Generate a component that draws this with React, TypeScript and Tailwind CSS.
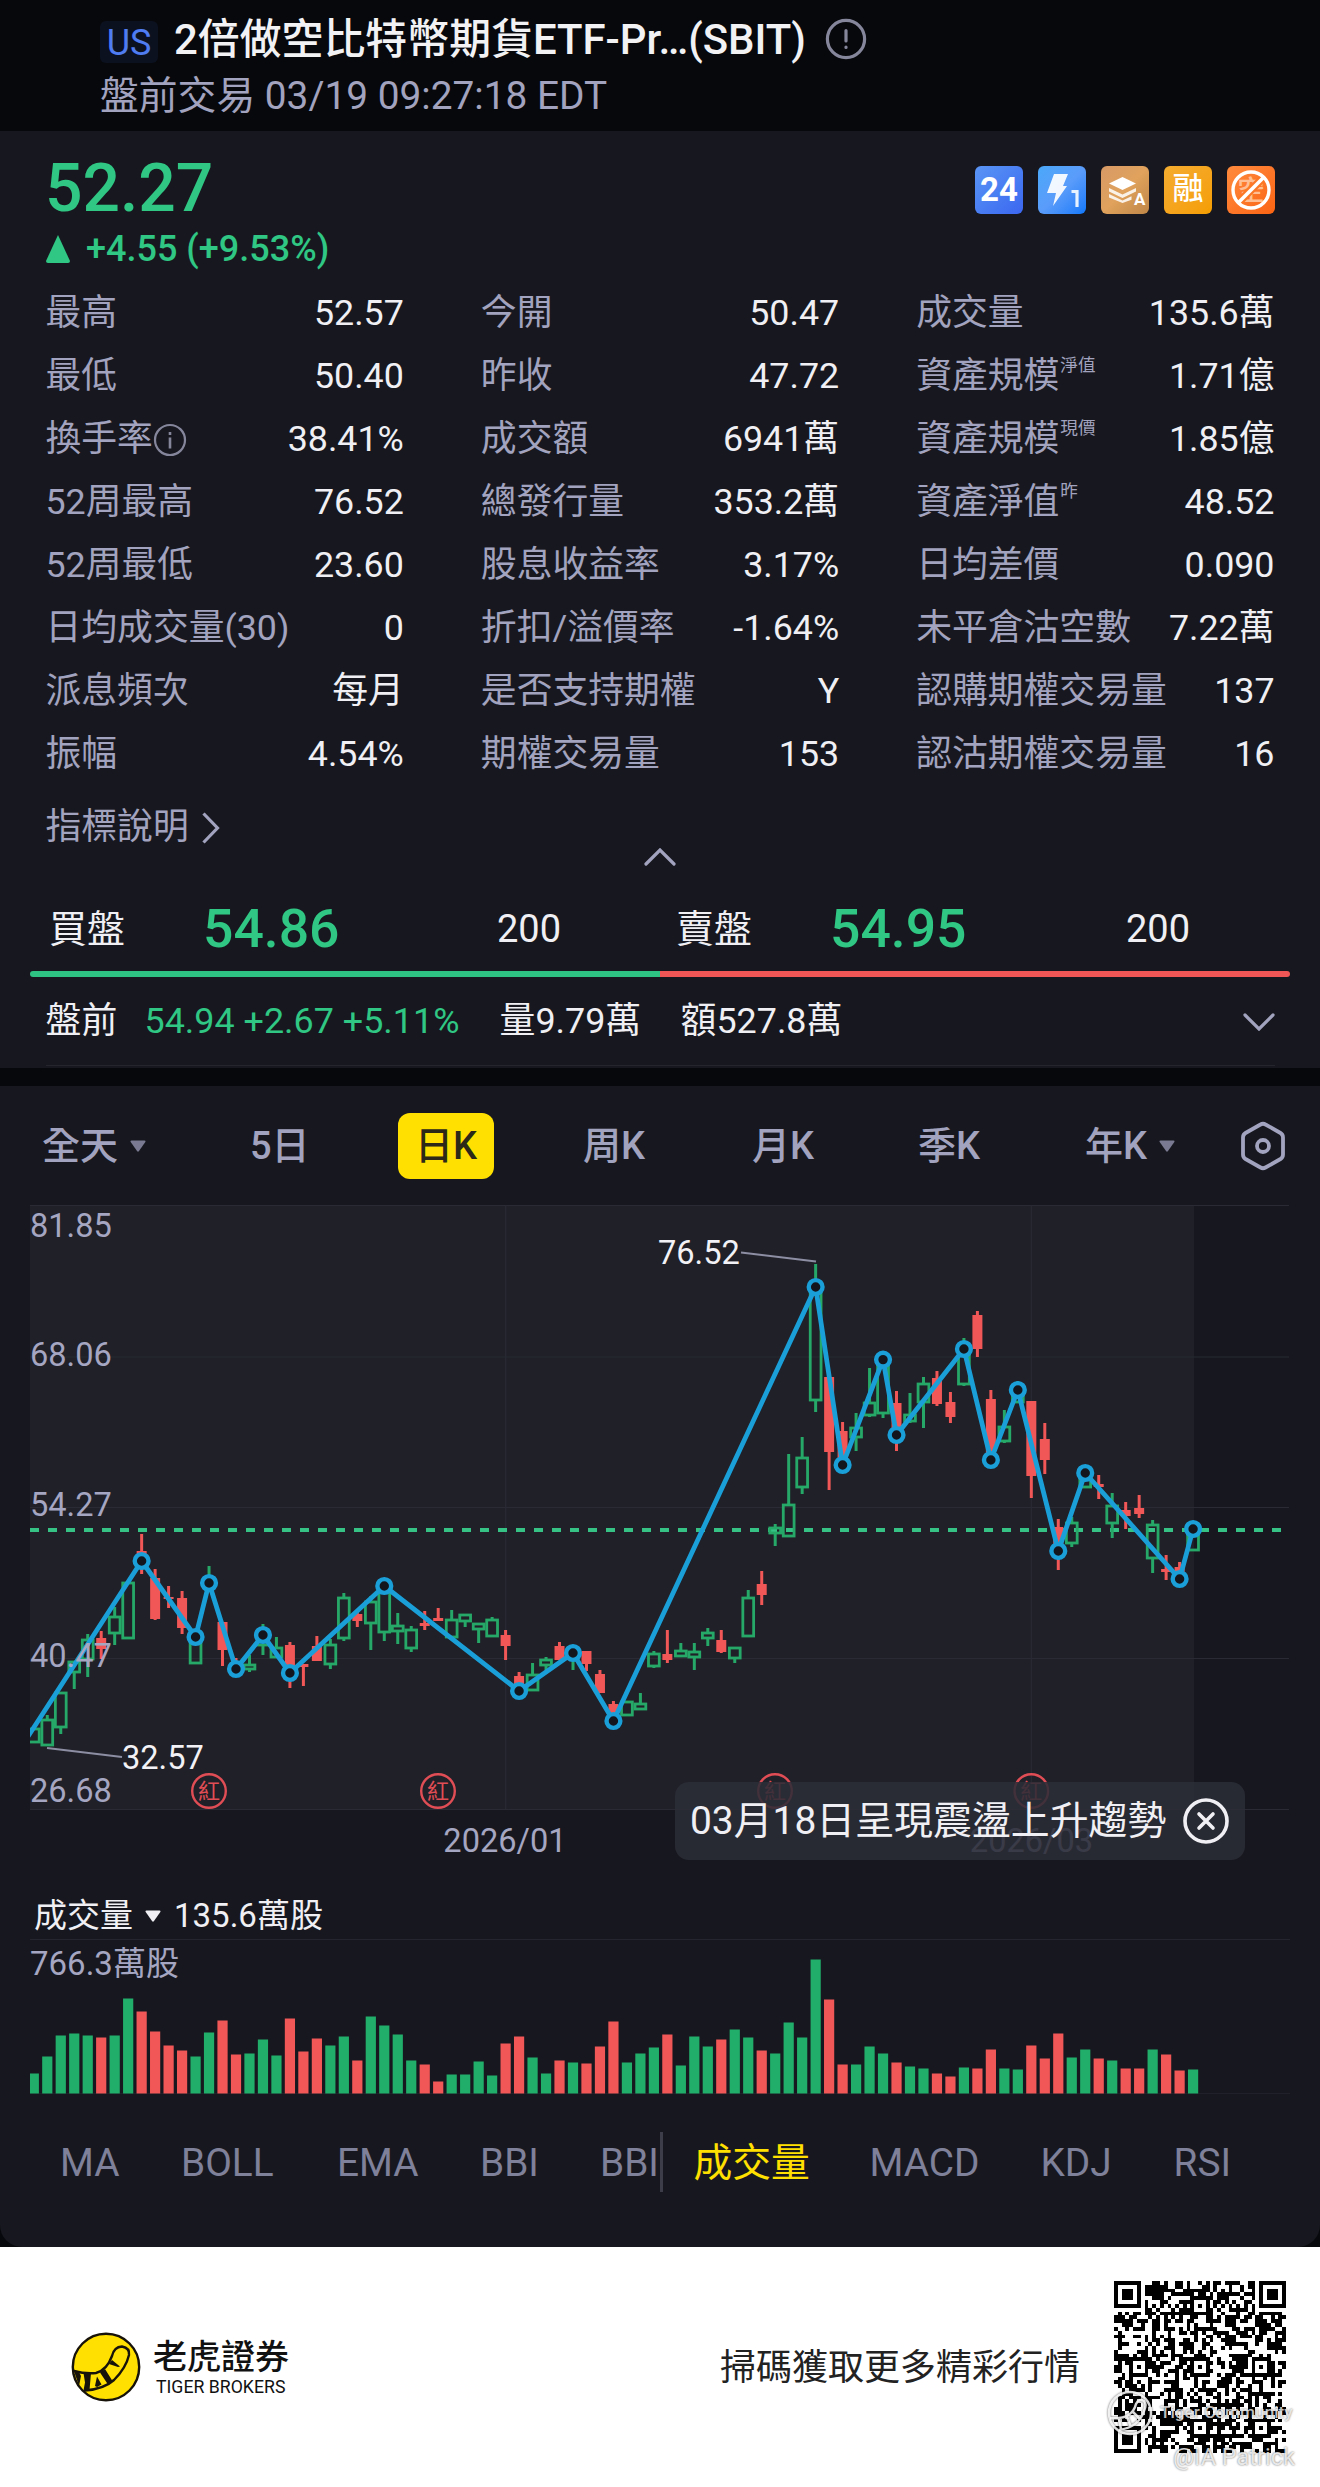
import React from "react";

const FONT = "font-['Roboto','Noto_Sans_CJK_TC',sans-serif]";

type Stat = { label: string; value: string; sup?: string; info?: boolean };

const STATS: Stat[] = [
  { label: "最高", value: "52.57" },
  { label: "今開", value: "50.47" },
  { label: "成交量", value: "135.6萬" },
  { label: "最低", value: "50.40" },
  { label: "昨收", value: "47.72" },
  { label: "資產規模", sup: "淨值", value: "1.71億" },
  { label: "換手率", info: true, value: "38.41%" },
  { label: "成交額", value: "6941萬" },
  { label: "資產規模", sup: "現價", value: "1.85億" },
  { label: "52周最高", value: "76.52" },
  { label: "總發行量", value: "353.2萬" },
  { label: "資產淨值", sup: "昨", value: "48.52" },
  { label: "52周最低", value: "23.60" },
  { label: "股息收益率", value: "3.17%" },
  { label: "日均差價", value: "0.090" },
  { label: "日均成交量(30)", value: "0" },
  { label: "折扣/溢價率", value: "-1.64%" },
  { label: "未平倉沽空數", value: "7.22萬" },
  { label: "派息頻次", value: "每月" },
  { label: "是否支持期權", value: "Y" },
  { label: "認購期權交易量", value: "137" },
  { label: "振幅", value: "4.54%" },
  { label: "期權交易量", value: "153" },
  { label: "認沽期權交易量", value: "16" },
];

// [up?, body top, body bottom, wick top, wick bottom, volume height]
const CANDLES: number[][] = [
  [1, 539, 552, 539, 552, 20], [1, 530, 555, 525, 555, 37], [1, 503, 537, 503, 544, 58], [1, 472, 482, 472, 499, 60],
  [1, 450, 469, 444, 487, 58], [0, 448, 459, 441, 469, 56], [1, 427, 443, 417, 455, 58], [1, 393, 448, 393, 448, 95],
  [0, 361, 375, 344, 384, 82], [0, 388, 429, 379, 430, 62], [0, 407, 409, 396, 418, 48], [0, 408, 438, 401, 444, 43],
  [1, 449, 473, 449, 473, 37], [1, 391, 395, 376, 400, 61], [0, 432, 460, 432, 476, 73], [0, 472, 479, 468, 479, 39],
  [1, 475, 479, 465, 482, 40], [1, 445, 455, 434, 465, 54], [1, 458, 467, 447, 467, 38], [0, 455, 482, 452, 498, 75],
  [0, 474, 477, 474, 496, 42], [0, 456, 471, 446, 471, 55], [1, 455, 474, 449, 479, 48], [1, 408, 448, 403, 451, 57],
  [0, 424, 431, 422, 437, 33], [1, 412, 433, 406, 460, 77], [1, 398, 442, 398, 451, 68], [1, 436, 441, 423, 454, 59],
  [1, 440, 458, 436, 462, 33], [0, 433, 436, 421, 440, 29], [0, 428, 431, 418, 431, 12], [1, 430, 447, 420, 448, 19],
  [1, 425, 431, 425, 437, 19], [1, 434, 439, 434, 453, 32], [1, 430, 446, 427, 446, 18], [0, 445, 456, 440, 470, 50],
  [0, 486, 500, 482, 501, 57], [1, 485, 500, 473, 501, 36], [1, 470, 475, 467, 480, 20], [0, 456, 470, 452, 470, 33],
  [1, 462, 466, 462, 480, 31], [0, 461, 474, 461, 481, 30], [0, 484, 503, 480, 503, 47], [0, 514, 531, 511, 531, 72],
  [1, 512, 525, 512, 525, 31], [1, 514, 519, 503, 519, 40], [1, 464, 476, 461, 478, 46], [0, 464, 470, 440, 473, 59],
  [1, 461, 466, 453, 467, 28], [1, 462, 467, 453, 480, 57], [1, 443, 448, 438, 456, 47], [0, 450, 462, 440, 463, 54],
  [1, 458, 468, 458, 473, 64], [1, 408, 446, 400, 446, 56], [0, 394, 405, 381, 415, 43], [1, 338, 343, 334, 356, 40],
  [1, 315, 346, 264, 346, 71], [1, 268, 297, 247, 304, 56], [1, 98, 210, 74, 222, 134], [0, 187, 262, 187, 300, 94],
  [0, 241, 273, 232, 275, 29], [1, 238, 247, 223, 261, 29], [1, 213, 225, 178, 227, 47], [1, 172, 223, 170, 228, 40],
  [0, 213, 246, 201, 261, 31], [1, 225, 231, 203, 233, 27], [1, 194, 212, 187, 238, 25], [0, 188, 214, 181, 216, 20],
  [0, 212, 227, 202, 233, 17], [1, 162, 194, 148, 196, 26], [0, 125, 159, 121, 167, 25], [0, 209, 269, 200, 269, 44],
  [1, 237, 251, 220, 253, 25], [1, 201, 212, 191, 213, 24], [0, 211, 286, 211, 308, 48], [0, 249, 270, 233, 284, 35],
  [0, 337, 361, 329, 380, 60], [1, 333, 353, 327, 357, 36], [1, 285, 297, 285, 298, 44], [0, 294, 297, 285, 309, 35],
  [1, 316, 333, 303, 348, 33], [0, 320, 326, 312, 339, 25], [0, 318, 324, 305, 328, 25], [1, 335, 368, 330, 383, 44],
  [0, 379, 382, 365, 390, 39], [0, 377, 389, 372, 389, 23], [1, 341, 360, 341, 360, 24],
];

const TREND: number[][] = [
  [8, 371], [12, 447], [13, 393], [15, 479], [17, 445], [19, 483], [26, 396], [36, 501], [40, 463], [43, 531], [58, 97],
  [60, 275], [63, 169.6], [64, 245], [69, 159], [71, 270], [73, 200], [76, 361], [78, 283], [85, 389], [86, 339],
];

const cx = (i: number) => 33.8 + i * 13.48;
const GREEN = "#26a968";
const RED = "#f25757";

const Y_LABELS: [string, number][] = [["81.85", 35], ["68.06", 163.5], ["54.27", 314], ["40.47", 464.5], ["26.68", 600]];

function Dividend({ x }: { x: number }) {
  return (
    <g>
      <circle cx={x} cy={601} r={16.8} fill="none" stroke="#e14d55" strokeWidth={2.4} />
      <text x={x} y={609} fontSize={22} fill="#e14d55" textAnchor="middle">紅</text>
    </g>
  );
}

function PriceChart() {
  return (
    <svg viewBox="0 0 1320 680" className="block h-[680px] w-full">
      <defs>
        <clipPath id="plot"><rect x={30} y={0} width={1290} height={680} /></clipPath>
      </defs>
      <rect x={30} y={15.5} width={1164} height={603.5} fill="#1f2028" />
      <g stroke="#292a33" strokeWidth={1.2}>
        {[15.5, 167, 317.5, 468.5, 619.5].map((y) => <line key={y} x1={30} x2={1289} y1={y} y2={y} />)}
        <line x1={505.7} x2={505.7} y1={15} y2={619} />
        <line x1={1031.3} x2={1031.3} y1={15} y2={619} />
      </g>
      <line x1={30} x2={1283} y1={340} y2={340} stroke="#36c285" strokeWidth={4} strokeDasharray="9 9" />
      <g clipPath="url(#plot)">
        {CANDLES.map(([up, t, b, wt, wb], i) => {
          const x = cx(i);
          const c = up ? GREEN : RED;
          return (
            <g key={i} stroke={c}>
              <line x1={x} x2={x} y1={wt} y2={t} strokeWidth={3} />
              <line x1={x} x2={x} y1={b} y2={wb} strokeWidth={3} />
              {up ? (
                <rect x={x - 5.4} y={t} width={10.8} height={b - t} fill="none" strokeWidth={2.8} />
              ) : (
                <rect x={x - 5} y={t} width={10} height={b - t} fill={c} strokeWidth={0} />
              )}
            </g>
          );
        })}
      </g>
      <g clipPath="url(#plot)">
        <polyline points={"27,548 " + TREND.map(([i, y]) => cx(i) + "," + y).join(" ")} fill="none" stroke="#1b9fd8" strokeWidth={4.8} strokeLinejoin="round" />
        {TREND.map(([i, y]) => <circle key={i} cx={cx(i)} cy={y} r={6.9} fill="#14161e" stroke="#1b9fd8" strokeWidth={4.4} />)}
      </g>
      <g fontSize={32.6} fill="#a5a6c1">
        {Y_LABELS.map(([t, y]) => <text key={t} x={30} y={y + 12}>{t}</text>)}
        <text x={505} y={662} textAnchor="middle" fontSize={32.6}>2026/01</text>
        <text x={1031.5} y={662} textAnchor="middle" fontSize={32.6}>2026/03</text>
      </g>
      <g stroke="#8d8ea3" strokeWidth={1.8}>
        <line x1={47} y1={558} x2={122} y2={567} />
        <line x1={741} y1={62.5} x2={816} y2={71.5} />
      </g>
      <g fontSize={32.6} fill="#f2f2f6">
        <text x={122} y={579}>32.57</text>
        <text x={658} y={74}>76.52</text>
      </g>
      <Dividend x={209} />
      <Dividend x={438} />
      <Dividend x={775} />
      <Dividend x={1031.3} />
    </svg>
  );
}

function VolumeChart() {
  return (
    <svg viewBox="0 0 1320 161" className="block h-[161px] w-full">
      <line x1={30} x2={1290} y1={0.5} y2={0.5} stroke="#24252e" />
      <line x1={30} x2={1290} y1={154.5} y2={154.5} stroke="#1f2029" />
      {CANDLES.map(([up, , , , , h], i) => {
        const x = Math.max(30, cx(i) - 5.1);
        return <rect key={i} x={x} y={154.5 - h} width={cx(i) + 5.1 - x} height={h} fill={up ? "#21ae6a" : RED} />;
      })}
      <text x={30} y={35.5} fontSize={33} fill="#a5a6c1">766.3萬股</text>
    </svg>
  );
}

const QR_N = 45;

function qrCells(): [number, number][] {
  const cells: [number, number][] = [];
  let seed = 20260319;
  const next = () => {
    seed = (seed * 1103515245 + 12345) % 2147483648;
    return seed / 2147483648;
  };
  const corners = [[0, 0], [QR_N - 7, 0], [0, QR_N - 7]];
  const aligns = [[22, 6], [6, 22], [22, 22], [38, 22], [22, 38], [38, 38]];
  for (let y = 0; y < QR_N; y++) {
    for (let x = 0; x < QR_N; x++) {
      let on = next() < 0.53;
      if (y === 6) on = x % 2 === 0;
      if (x === 6) on = y % 2 === 0;
      for (const [ax, ay] of aligns) {
        const d = Math.max(Math.abs(x - ax), Math.abs(y - ay));
        if (d <= 2) on = d !== 1;
      }
      for (const [fx, fy] of corners) {
        const d = Math.max(Math.abs(x - fx - 3), Math.abs(y - fy - 3));
        if (d <= 4) on = d !== 4 && d !== 2;
      }
      if (on) cells.push([x, y]);
    }
  }
  return cells;
}

function QrCode() {
  return (
    <svg viewBox="0 0 45 45" className="block h-[172px] w-[172px]" shapeRendering="crispEdges">
      <path d={qrCells().map(([x, y]) => `M${x} ${y}h1v1h-1z`).join("")} fill="#000" />
    </svg>
  );
}

function StatusBadges() {
  const box = "flex h-12 w-12 items-center justify-center overflow-hidden rounded-md text-white";
  return (
    <div className="mt-px flex gap-[15px]">
      <div className={`${box} bg-gradient-to-br from-[#5a95f5] to-[#3c66f0] text-[33px] font-bold`}>24</div>
      <div className={`${box} bg-gradient-to-br from-[#4aa8fa] via-[#5a9cfa] to-[#0a78fa]`}>
        <svg viewBox="0 0 48 48" className="h-12 w-12">
          <path d="M16 8h14l-5 12h4L15 40l3-13H9z" fill="#fff" fillOpacity={0.92} />
          <path d="M33.500 25.500h5.500V41" fill="none" stroke="#e6f2ff" strokeWidth={3.200} />
        </svg>
      </div>
      <div className={`${box} bg-gradient-to-br from-[#d89a66] via-[#e0a25c] to-[#bf8647]`}>
        <svg viewBox="0 0 48 48" className="h-12 w-12">
          <path d="M21.500 11 35 17.500 21.500 24 8 17.500z" fill="#fff" />
          <path d="M8 22l13.500 6.500L35 22v3.500L21.500 32 8 25.500zM8 28l13.500 6.500 9-4.300v3.600L21.500 37 8 31.500z" fill="#fff" fillOpacity={0.85} />
          <text x={33} y={39} fontSize={17} fontWeight={700} fill="#fff">A</text>
        </svg>
      </div>
      <div className={`${box} bg-gradient-to-br from-[#f5ac2e] to-[#f59e00] text-[31px] font-medium`}>融</div>
      <div className={`${box} bg-gradient-to-br from-[#ff8a3c] to-[#fb6410]`}>
        <svg viewBox="0 0 48 48" className="h-12 w-12">
          <text x={24} y={34} fontSize={27} textAnchor="middle" fill="#ffbf94" fontWeight={500}>空</text>
          <path d="M12 36 36 12" stroke="#fb7826" strokeWidth={8} />
          <circle cx={24} cy={24} r={18} fill="none" stroke="#fff" strokeWidth={3.400} />
          <path d="M12 36 36 12" stroke="#fff" strokeWidth={3.600} />
        </svg>
      </div>
    </div>
  );
}

function Header() {
  return (
    <header className="flex h-[131px] flex-col bg-[#07080c] pl-[100px] pt-[11px]">
      <div className="flex h-14 items-center">
        <span className="mt-1.5 flex h-[42px] w-[58px] items-center justify-center rounded-md bg-[#0c1120] pt-0.5 text-[36px] leading-none text-[#4f7cf0]">US</span>
        <span className="ml-4 w-[650px] whitespace-nowrap text-[41.900px] font-medium leading-[57px] text-[#f2f2f4]">2倍做空比特幣期貨ETF-Pr…(SBIT)</span>
        <svg viewBox="0 0 44 44" className="h-11 w-11" fill="none" stroke="#85869c" strokeWidth={3.200} strokeLinecap="round">
          <circle cx={22} cy={22} r={18.600} />
          <path d="M22 13.500v10.500M22 30v.5" />
        </svg>
      </div>
      <div className="h-[54px] whitespace-nowrap text-[38.800px] leading-[57px] text-[#a2a3be]">盤前交易 03/19 09:27:18 EDT</div>
    </header>
  );
}

function QuotePanel() {
  return (
    <section className="flex h-[937px] flex-col bg-[#17181f] pt-[26px]">
      <div className="flex h-16 items-center justify-between pl-[45px] pr-[45px]">
        <span className="text-[66px] font-medium leading-[64px] text-[#2fc783]">52.27</span>
        <StatusBadges />
      </div>
      <div className="mt-1 flex h-12 items-center pl-[46px] text-[36px] font-medium text-[#2fc783]">
        <svg viewBox="0 0 24 28" className="h-7 w-6"><path d="M12 0 24 26q0 2-2 2H2q-2 0-2-2z" fill="#2fc783" /></svg>
        <span className="ml-4">+4.55 (+9.53%)</span>
      </div>
      <div className="mt-[9px] grid grid-cols-3 gap-x-[77px] px-[45.500px]">
        {STATS.map((s) => (
          <div key={s.label + (s.sup || "")} className="flex h-[63px] items-center justify-between whitespace-nowrap text-[35.800px] leading-[63px]">
            <span className="flex text-[#a2a3be]">
              {s.label}
              {s.sup && <span className="-mt-[11px] ml-px text-[17.600px]">{s.sup}</span>}
              {s.info && (
                <svg viewBox="0 0 34 34" className="mt-[15px] h-[34px] w-[34px]" fill="none" stroke="#85869c" strokeWidth={2.200}>
                  <circle cx={17} cy={17} r={15} />
                  <path d="M17 14.500v11M17 9v3" strokeWidth={2.600} />
                </svg>
              )}
            </span>
            <span className="text-[#f0f0f4]">{s.value}</span>
          </div>
        ))}
      </div>
      <div className="mt-[19px] flex h-[46px] items-center pl-[45.500px] text-[35.800px] text-[#a2a3be]">
        指標說明
        <svg viewBox="0 0 18 32" className="ml-[13px] h-8 w-[18px]" fill="none" stroke="#a2a3be" strokeWidth={3.200}><path d="M1.500 1.500 15.500 16 1.500 30.500" /></svg>
      </div>
      <svg viewBox="0 0 32 18" className="mx-auto -mt-[3px] h-[18px] w-8 shrink-0" fill="none" stroke="#a2a3be" strokeWidth={3.200} strokeLinecap="round"><path d="M2 16 16 2l14 14" /></svg>
      <div className="mt-[22px] grid h-[83px] grid-cols-[154px_294px_179px_154px_296px_1fr] items-center pl-[49px] text-[38px] text-[#f0f0f4]">
        <span>買盤</span>
        <span className="text-[53.500px] font-medium text-[#2fc783]">54.86</span>
        <span>200</span>
        <span>賣盤</span>
        <span className="text-[53.500px] font-medium text-[#2fc783]">54.95</span>
        <span>200</span>
      </div>
      <div className="mx-[30px] flex h-1.5 overflow-hidden rounded-sm">
        <div className="flex-1 bg-[#2fc383]" />
        <div className="flex-1 bg-[#f05656]" />
      </div>
      <div className="mx-[45.500px] grid h-[89px] grid-cols-[99px_355px_181px_1fr_32px] items-center whitespace-nowrap border-b border-[#24252d] pt-0.5 text-[35.900px] text-[#f0f0f4]">
        <span>盤前</span>
        <span className="text-[#2fc783]">54.94 +2.67 +5.11%</span>
        <span>量9.79萬</span>
        <span>額527.8萬</span>
        <svg viewBox="0 0 32 18" className="h-[18px] w-8" fill="none" stroke="#a2a3be" strokeWidth={3.200} strokeLinecap="round"><path d="M2 2l14 14L30 2" /></svg>
      </div>
    </section>
  );
}

function Caret({ color }: { color: string }) {
  return <svg viewBox="0 0 16 12" className="h-3 w-4"><path d="M1.500.500h13q1.500 0 .8 1.600L9 11q-1 1.300-2 0L.7 2.100Q0 .5 1.500.5z" fill={color} /></svg>;
}

function PeriodTabs() {
  return (
    <div className="grid h-[66px] grid-cols-[208px_148px_185px_169px_166px_167px_154px_1fr] items-center pl-[42px] text-[38px] font-medium text-[#a2a3be]">
      <span className="flex items-center">全天<span className="ml-3"><Caret color="#7a7b92" /></span></span>
      <span>5日</span>
      <span className="flex h-[66px] w-24 items-center justify-center rounded-xl bg-[#ffe000] text-[#2c2918]">日K</span>
      <span>周K</span>
      <span>月K</span>
      <span>季K</span>
      <span className="flex items-center">年K<span className="ml-3"><Caret color="#7a7b92" /></span></span>
      <svg viewBox="0 0 48 50" className="h-[50px] w-12" fill="none" stroke="#a2a3be" strokeWidth={3.800} strokeLinejoin="round">
        <path d="M21.500 3.500q2.500-1.500 5 0l15 8.500q2.500 1.500 2.500 4.500v17q0 3-2.500 4.500l-15 8.500q-2.500 1.500-5 0L6.500 38Q4 36.500 4 33.500v-17Q4 13.500 6.500 12z" />
        <circle cx={24} cy={25} r={6} />
      </svg>
    </div>
  );
}

function ChartPanel() {
  return (
    <section className="flex h-[1161px] flex-col rounded-b-[22px] bg-[#17181f] pt-[27px]">
      <PeriodTabs />
      <div className="relative mt-[11px]">
        <PriceChart />
        <div className="absolute left-[675px] top-[592px] flex h-[78px] w-[570px] items-center rounded-[14px] bg-[#2b2c37]/88 pl-[15px] text-[38.900px] text-[#f0f0f4]">
          <span className="w-[492px] whitespace-nowrap">03月18日呈現震盪上升趨勢</span>
          <svg viewBox="0 0 48 48" className="h-12 w-12" fill="none" stroke="#f0f0f4" strokeWidth={3.600} strokeLinecap="round">
            <circle cx={24} cy={24} r={21} />
            <path d="m17 17 14 14m0-14-14 14" />
          </svg>
        </div>
      </div>
      <div className="mt-5 flex h-[49px] items-center whitespace-nowrap pl-[34px] pt-0.5 text-[33px] text-[#f0f0f4]">
        <span className="w-[111px]">成交量</span>
        <Caret color="#f0f0f4" />
        <span className="ml-[13px]">135.6萬股</span>
      </div>
      <VolumeChart />
      <div className="mt-8 flex h-[60px] items-center">
        <div className="grid h-[60px] w-[663px] grid-cols-[121px_156px_143px_120px_1fr] items-center overflow-hidden whitespace-nowrap border-r-[3px] border-[#3c3d49] pl-[60px] pt-0.5 text-[38.800px] text-[#7f8099]">
          <span>MA</span>
          <span>BOLL</span>
          <span>EMA</span>
          <span>BBI</span>
          <span>BBI</span>
        </div>
        <div className="grid grid-cols-[176px_171px_133px_1fr] items-center pl-[30.500px] pt-0.5 text-[38.800px] text-[#7f8099]">
          <span className="text-[#ffe000]">成交量</span>
          <span>MACD</span>
          <span>KDJ</span>
          <span>RSI</span>
        </div>
      </div>
    </section>
  );
}

function TigerLogo() {
  return (
    <svg viewBox="0 0 70 70" className="h-[70px] w-[70px]">
      <circle cx={35} cy={35} r={33.200} fill="#ffe000" stroke="#17120a" strokeWidth={2.400} />
      <path d="M3 39Q14 42 25 41Q36 38 41 24Q43 15 51 14.500Q59 16 58 23Q55 36 43 48Q33 57 14 58.500" fill="none" stroke="#17120a" strokeWidth={2.400} strokeLinecap="round" />
      <path d="M2.500 37.500 8 40l2 4-2 10zM12.500 41h7.500l-1.500 17-6 .5 1.500-8zM26 44.500l4.500 8-4.500 2.500-2-1zM29 40.500l5-3.500 7.500 12-4.500 3.500zM38 32l3-4 8 6.500-2 .5z" fill="#17120a" />
    </svg>
  );
}

function Footer() {
  return (
    <footer className="relative flex h-[240px] items-center bg-white pl-[71px]">
      <TigerLogo />
      <div className="ml-3 flex w-[567px] flex-col">
        <span className="text-[34px] font-medium leading-[40px] text-[#111]">老虎證券</span>
        <span className="ml-[3px] text-[17.700px] leading-5 text-[#111]">TIGER BROKERS</span>
      </div>
      <span className="w-[394px] whitespace-nowrap pt-0.5 text-[36px] text-[#222]">掃碼獲取更多精彩行情</span>
      <QrCode />
      <div className="absolute left-[1107px] top-[143px] flex items-center text-white/75">
        <svg viewBox="0 0 46 46" className="h-[46px] w-[46px] drop-shadow-[0_0_1px_rgba(0,0,0,0.7)]" fill="none" stroke="#fff" strokeOpacity={0.85} strokeWidth={2.500}>
          <circle cx={23} cy={23} r={21} />
          <path d="M3 28q22 2 26-14 3-6 8-3 3 3 0 10Q32 37 12 40M12 29l2 10M20 27l4 10M26 22l7 7" />
        </svg>
        <span className="ml-[7px] whitespace-nowrap text-[17.200px] font-medium [text-shadow:0_0_2px_rgba(0,0,0,0.6)]">Tiger Community</span>
      </div>
      <div className="absolute left-[1173px] top-[196px] whitespace-nowrap text-[23.500px] leading-7 text-white/80 [text-shadow:0_0_2px_rgba(0,0,0,0.65)]">@IA Patrick</div>
    </footer>
  );
}

export default function App() {
  return (
    <div className={`${FONT} flex h-[2487px] w-[1320px] flex-col overflow-hidden bg-[#07080c]`}>
      <Header />
      <QuotePanel />
      <div className="h-[18px]" />
      <ChartPanel />
      <Footer />
    </div>
  );
}
